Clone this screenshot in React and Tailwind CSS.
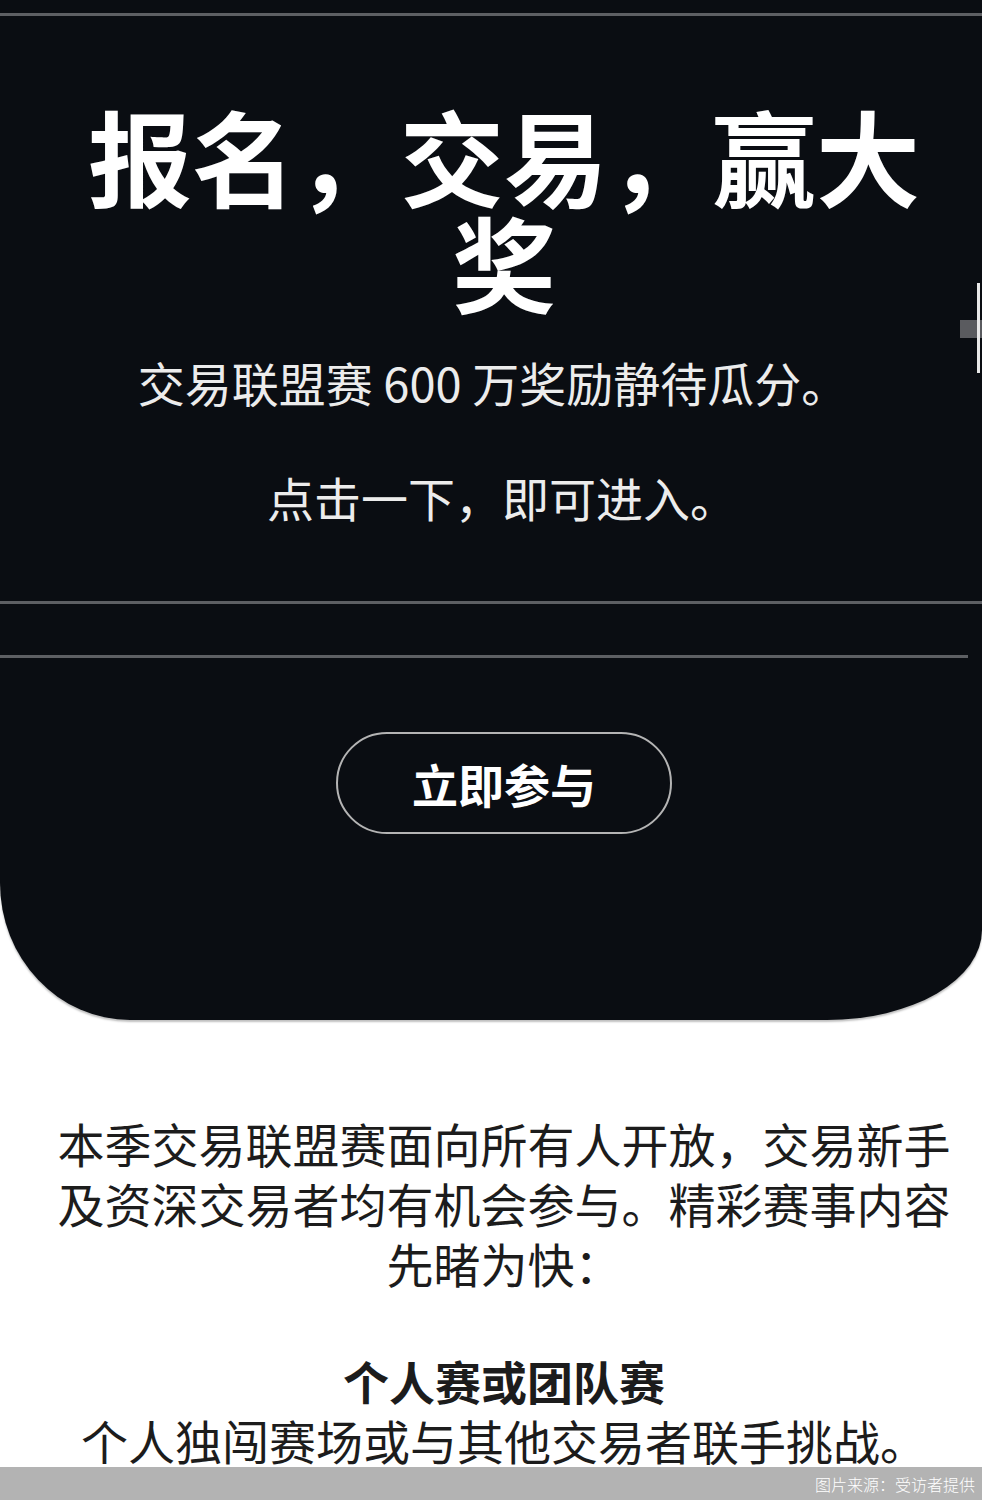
import React from "react";

const cjk = { fontFamily: '"Noto Sans CJK SC", "Noto Sans", sans-serif' };

const App = () => {
  return (
    <div
      className="relative w-[982px] h-[1500px] overflow-hidden bg-white"
      style={cjk}
    >
      {/* Dark hero panel */}
      <div className="flex flex-col h-[1020px] bg-[#0a0d12] rounded-bl-[130px_137px] rounded-br-[155px_90px] shadow-[0_2px_2px_rgba(0,0,0,0.25)]">
        <div className="mt-[13px] h-[3px] w-full bg-[#5d5f63]" />

        <div className="mt-[86px] mx-auto w-[880px] pl-[26px] text-center">
          <h1 className="text-[104px] leading-[106px] font-bold text-white">
            报名，交易，赢大奖
          </h1>
        </div>

        <p className="mt-[38px] pl-[4px] text-center text-[47px] leading-[60px] text-[#ececec]">
          交易联盟赛 600 万奖励静待瓜分。
        </p>
        <p className="mt-[55px] pl-[22px] text-center text-[47px] leading-[60px] text-[#ececec]">
          点击一下，即可进入。
        </p>

        <div className="mt-[74px] h-[3px] w-full bg-[#5d5f63]" />
        <div className="mt-[51px] h-[3px] w-[968px] bg-[#5d5f63]" />

        <div className="mt-[74px] flex justify-center pl-[26px]">
          <button className="flex items-center justify-center w-[336px] h-[102px] rounded-full border-2 border-[#b4b4b4] text-[46px] font-bold text-white">
            立即参与
          </button>
        </div>
      </div>

      {/* Body copy */}
      <div className="ml-[54px] w-[900px] mt-[93px] text-center text-[#1c1c1c]">
        <p className="text-[47px] leading-[60px]">
          本季交易联盟赛面向所有人开放，交易新手
          <br />
          及资深交易者均有机会参与。精彩赛事内容
          <br />
          先睹为快：
        </p>
        <h2 className="mt-[57px] text-[46px] leading-[60px] font-bold">
          个人赛或团队赛
        </h2>
        <p className="text-[47px] leading-[60px]">
          个人独闯赛场或与其他交易者联手挑战。
        </p>
      </div>

      {/* Right edge scroll artifacts */}
      <div className="absolute left-[960px] top-[320px] h-[18px] w-[22px] bg-[#5a5b5f]" />
      <div className="absolute left-[977px] top-[283px] h-[90px] w-[3px] bg-[#e8e8e8]" />

      {/* Photo credit bar */}
      <div className="absolute bottom-0 left-0 flex h-[33px] w-full items-center justify-end bg-[#b3b3b3] pr-[7px]">
        <span className="text-[16px] font-light text-white">
          图片来源：受访者提供
        </span>
      </div>
    </div>
  );
};

export default App;
